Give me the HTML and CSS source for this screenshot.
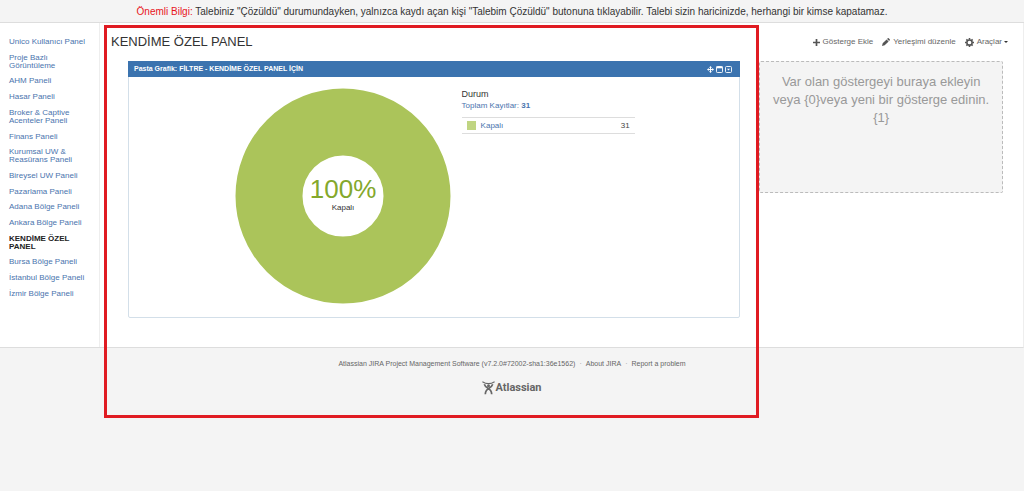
FILE: index.html
```html
<!DOCTYPE html>
<html lang="tr">
<head>
<meta charset="utf-8">
<meta name="viewport" content="width=device-width, initial-scale=1">
<title>KENDİME ÖZEL PANEL</title>
<link rel="stylesheet" href="styles.css">
</head>
<body>
<p class="banner"><span class="banner-label">Önemli Bilgi:</span> Talebiniz "Çözüldü" durumundayken, yalnızca kaydı açan kişi "Talebim Çözüldü" butonuna tıklayabilir. Talebi sizin haricinizde, herhangi bir kimse kapatamaz.</p>
<div class="page">
  <nav class="sidebar">
    <ul class="tabs">
      <li><a href="#">Unico Kullanıcı Panel</a></li>
      <li><a href="#">Proje Bazlı<br>Görüntüleme</a></li>
      <li><a href="#">AHM Paneli</a></li>
      <li><a href="#">Hasar Paneli</a></li>
      <li><a href="#">Broker &amp; Captive<br>Acenteler Paneli</a></li>
      <li><a href="#">Finans Paneli</a></li>
      <li><a href="#">Kurumsal UW &amp;<br>Reasürans Paneli</a></li>
      <li><a href="#">Bireysel UW Paneli</a></li>
      <li><a href="#">Pazarlama Paneli</a></li>
      <li><a href="#">Adana Bölge Paneli</a></li>
      <li><a href="#">Ankara Bölge Paneli</a></li>
      <li><a href="#" class="current" aria-current="page">KENDİME ÖZEL<br>PANEL</a></li>
      <li><a href="#">Bursa Bölge Paneli</a></li>
      <li><a href="#">İstanbul Bölge Paneli</a></li>
      <li><a href="#">İzmir Bölge Paneli</a></li>
    </ul>
  </nav>
  <main class="dashboard">
    <header class="heading">
      <h1>KENDİME ÖZEL PANEL</h1>
      <div class="tools">
        <button type="button" class="tool"><svg width="7" height="7" viewBox="0 0 7 7"><path d="M3.5 0v7M0 3.5h7" stroke="#555" stroke-width="1.7"/></svg>Gösterge Ekle</button>
        <button type="button" class="tool"><svg width="8" height="8" viewBox="0 0 8 8"><path d="M0 8l.7-2.7L4.6 1.4l2 2L2.700 7.300zM5.100.9l.6-.6q.5-.5 1 0l1 1q.5.5 0 1l-.6.6z" fill="#555"/></svg>Yerleşimi düzenle</button>
        <button type="button" class="tool"><svg width="9" height="9" viewBox="0 0 10 10"><circle cx="5" cy="5" r="2.900" fill="none" stroke="#555" stroke-width="1.700"/><path d="M5 0v2M5 8v2M0 5h2M8 5h2M1.500 1.500l1.300 1.300M7.200 7.200l1.300 1.300M8.500 1.500L7.200 2.800M2.800 7.200L1.500 8.500" stroke="#555" stroke-width="1.700"/></svg>Araçlar<span class="caret"></span></button>
      </div>
    </header>
    <div class="columns">
      <section class="gadget">
        <div class="gadget-bar">
          <h2>Pasta Grafik: FİLTRE - KENDİME ÖZEL PANEL İÇİN</h2>
          <div class="gadget-tools">
            <button type="button" aria-label="Taşı"><svg width="7" height="7" viewBox="0 0 7 7"><path d="M3.500 1v5M1 3.500h5" stroke="#fff"/><path d="M3.500 0l1.500 1.800H2zM3.500 7L2 5.200h3zM0 3.500L1.800 2v3zM7 3.500L5.200 5V2z" fill="#fff"/></svg></button>
            <button type="button" aria-label="Büyüt"><svg width="7" height="7" viewBox="0 0 7 7"><rect x=".5" y=".5" width="6" height="6" rx=".8" fill="none" stroke="#fff" stroke-width=".9"/><path d="M.5 1.400h6" stroke="#fff" stroke-width="1.800"/></svg></button>
            <button type="button" aria-label="Menü"><svg width="7" height="7" viewBox="0 0 7 7"><rect x=".5" y=".5" width="6" height="6" rx="1" fill="none" stroke="#fff" stroke-width=".9"/><path d="M2 2.800h3L3.500 4.600z" fill="#fff"/></svg></button>
          </div>
        </div>
        <div class="gadget-body">
          <svg class="donut" width="216" height="216" viewBox="0 0 216 216" role="img" aria-label="Kapalı 100%">
            <circle cx="108" cy="108" r="74" fill="none" stroke="#abc45a" stroke-width="67"/>
            <text class="share" x="108" y="110" text-anchor="middle">100%</text>
            <text class="share-name" x="108" y="122" text-anchor="middle">Kapalı</text>
          </svg>
          <div class="legend">
            <h3>Durum</h3>
            <p><a href="#">Toplam Kayıtlar: <strong>31</strong></a></p>
            <table>
              <tr><td class="key"><span class="swatch"></span></td><td><a href="#">Kapalı</a></td><td class="count">31</td></tr>
            </table>
          </div>
        </div>
      </section>
      <section class="empty">Var olan göstergeyi buraya ekleyin veya {0}veya yeni bir gösterge edinin. {1}</section>
    </div>
  </main>
</div>
<footer class="footer">
  <ul class="footer-links">
    <li>Atlassian JIRA Project Management Software (v7.2.0#72002-sha1:36e1562)</li>
    <li><a href="#">About JIRA</a></li>
    <li><a href="#">Report a problem</a></li>
  </ul>
  <a href="#" class="brand"><svg width="13" height="14" viewBox="0 0 13 14"><path d="M.4.700Q6.500 4.600 12.600.700" fill="none" stroke="#666" stroke-width="1.100"/><circle cx="6.500" cy="4.700" r="1.500" fill="#666"/><path d="M2.300 3.300Q3.300 6.200 6 7.200Q9.500 9 9.700 13.200M10.700 3.300Q9.700 6.200 7 7.200Q3.500 9 3.300 13.200" fill="none" stroke="#666" stroke-width="1.700"/></svg>Atlassian</a>
</footer>
<div class="highlight"></div>
</body>
</html>
```
FILE: styles.css
```css
* {
  box-sizing: border-box;
}

body {
  position: relative;
  margin: 0;
  min-height: 100vh;
  background: #f4f4f4;
  color: #333;
  font: 8px/8px "Liberation Sans", Arial, sans-serif;
}

h1, h2, h3, p, ul {
  margin: 0;
  padding: 0;
  font-weight: normal;
}

ul {
  list-style: none;
}

a {
  color: #4a74ae;
  text-decoration: none;
}

button {
  padding: 0;
  border: 0;
  background: none;
  font: inherit;
  color: inherit;
}

svg {
  display: block;
  flex: none;
}

.banner {
  padding: 5px 0 4px;
  border-bottom: 1px solid #ddd;
  font-size: 10px;
  line-height: 13px;
  text-align: center;
}

.banner-label {
  color: #e8141c;
}

.page {
  display: flex;
  background: #fff;
  border-right: 1px solid #eee;
  border-bottom: 1px solid #ddd;
}

.sidebar {
  display: flex;
  width: 100px;
  flex: none;
  padding: 15px 0 49px 9px;
  border-right: 1px solid #eee;
}

.tabs {
  display: flex;
  flex-direction: column;
  justify-content: space-between;
}

.tabs li {
  display: flex;
}

.tabs .current {
  color: #222;
  font-weight: bold;
}

.dashboard {
  flex: 1;
  padding: 10px 20px 29px 11px;
}

.heading {
  display: flex;
  justify-content: space-between;
  align-items: center;
  height: 18px;
  margin-right: -5px;
}

h1 {
  font-size: 13px;
  line-height: 18px;
}

.tools {
  display: flex;
  gap: 9px;
  color: #666;
}

.tool {
  display: flex;
  align-items: center;
  gap: 3px;
}

.caret {
  margin-left: -1px;
  border: 2px solid transparent;
  border-top-color: #333;
  border-bottom: 0;
}

.columns {
  display: grid;
  grid-template-columns: 613fr 244fr;
  gap: 19px;
  align-items: start;
  padding: 10px 0 0 17px;
}

.gadget {
  border: 1px solid #d3dfe9;
  border-radius: 2px;
}

.gadget-bar {
  display: flex;
  justify-content: space-between;
  align-items: center;
  margin: -1px -1px 0;
  padding: 0 8px 0 6px;
  height: 16px;
  background: #3b73af;
  color: #fff;
}

h2 {
  font-size: 7px;
  font-weight: bold;
}

.gadget-tools {
  display: flex;
  gap: 2px;
}

.gadget-body {
  display: grid;
  grid-template-columns: 7fr 6fr;
  padding: 11px 0 13px;
}

.donut {
  margin-left: auto;
  margin-right: 7px;
}

.share {
  font-size: 26px;
  fill: #84a82c;
}

.share-name {
  font-size: 8px;
  fill: #333;
}

.legend {
  width: 173px;
  margin-left: 4px;
}

h3 {
  font-size: 9px;
  line-height: 12px;
}

.legend p {
  margin-bottom: 5px;
  line-height: 12px;
}

table {
  width: 100%;
  border: solid #ddd;
  border-width: 1px 0;
  border-spacing: 0;
  color: #444;
}

td {
  height: 15px;
  padding: 0;
}

.key {
  width: 19px;
}

.swatch {
  display: block;
  width: 9px;
  height: 9px;
  margin-left: 5px;
  background: #c0d582;
}

.count {
  padding-right: 5px;
  text-align: right;
}

.empty {
  min-height: 132px;
  padding: 11px 12px;
  border: 1px dashed #bbb;
  border-radius: 2px;
  background: #f4f4f4;
  color: #999;
  font-size: 13px;
  line-height: 18px;
  text-align: center;
}

.footer {
  display: flex;
  flex-direction: column;
  align-items: center;
  gap: 13px;
  padding: 12px 0;
  color: #666;
}

.footer a {
  color: #666;
}

.footer-links {
  display: flex;
  font-size: 7px;
}

.footer-links li + li::before {
  content: "·";
  margin: 0 4px;
  color: #999;
}

.footer .brand {
  display: flex;
  align-items: center;
  font: bold 11px/14px Roboto, sans-serif;
}

.highlight {
  position: absolute;
  top: 25px;
  left: 104px;
  width: 64%;
  height: 393px;
  border: 3px solid #e01b22;
  pointer-events: none;
}
```
